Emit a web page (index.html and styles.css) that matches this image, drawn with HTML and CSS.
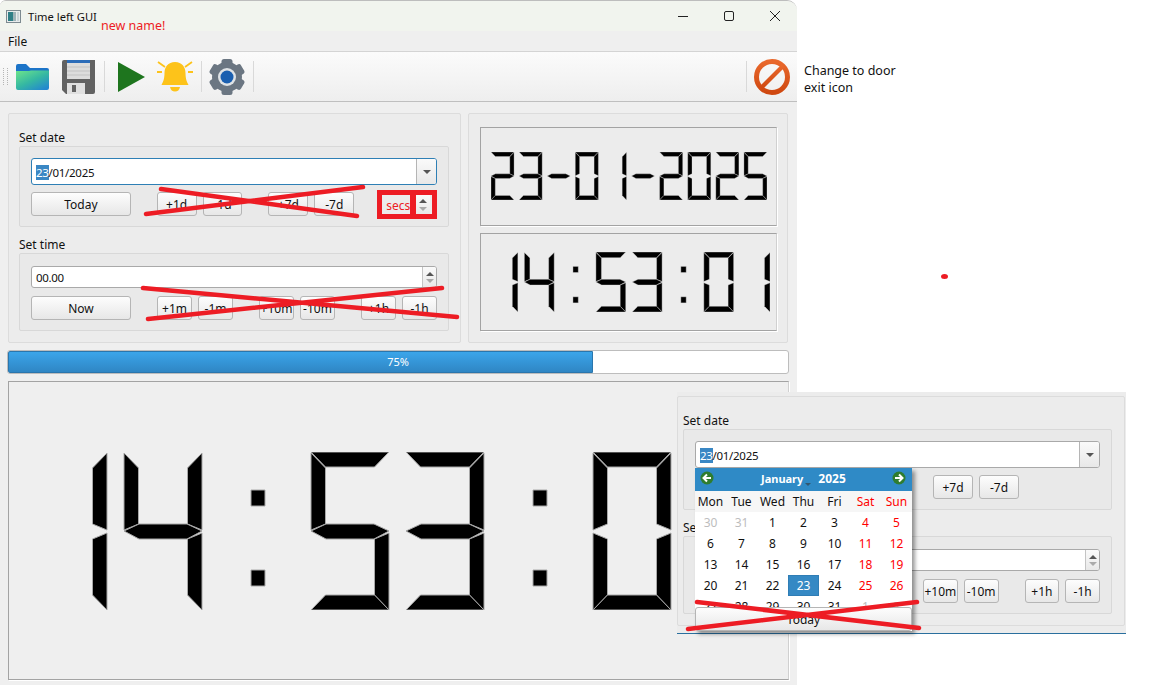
FILE: index.html
```html
<!DOCTYPE html>
<html lang="en">

<head>
    <meta charset="UTF-8">
    <meta name="viewport" content="width=device-width, initial-scale=1.0">
    <title>Time left GUI</title>
    <link rel="stylesheet" href="styles.css">
</head>

<body>
    <!-- LCD segments, shared by the three clocks -->
    <svg class="defs">
        <defs>
            <polygon id="sa" points="0,0 78,0 63.5,15 14.5,15" />
            <polygon id="sf" points="0,1 14.5,16 14.5,72 0,78" />
            <polygon id="sb" points="78,1 63.5,16 63.5,72 78,78" />
            <polygon id="sg" points="0,79 15,72 63,72 78,79 63,87 15,87" />
            <polygon id="se" points="0,81 14.5,87 14.5,143 0,158" />
            <polygon id="sc" points="78,81 63.5,87 63.5,143 78,158" />
            <polygon id="sd" points="0,158 78,158 63.5,143 14.5,143" />
            <g id="d0"><use href="#sa" /><use href="#sf" /><use href="#sb" /><use href="#se" /><use href="#sc" /><use href="#sd" /></g>
            <g id="d1"><use href="#sb" /><use href="#sc" /></g>
            <g id="d2"><use href="#sa" /><use href="#sb" /><use href="#sg" /><use href="#se" /><use href="#sd" /></g>
            <g id="d3"><use href="#sa" /><use href="#sb" /><use href="#sg" /><use href="#sc" /><use href="#sd" /></g>
            <g id="d4"><use href="#sf" /><use href="#sb" /><use href="#sg" /><use href="#sc" /></g>
            <g id="d5"><use href="#sa" /><use href="#sf" /><use href="#sg" /><use href="#sc" /><use href="#sd" /></g>
            <g id="colon"><rect x="0" y="38" width="14" height="16" /><rect x="0" y="118" width="14" height="16" /></g>
            <g id="clock">
                <use href="#d1" x="0" /><use href="#d4" x="95" /><use href="#colon" x="222" />
                <use href="#d5" x="282" /><use href="#d3" x="377" /><use href="#colon" x="504" />
                <use href="#d0" x="564" /><use href="#d1" x="659" />
            </g>
        </defs>
    </svg>

    <div class="window">
        <div class="titlebar">
            <svg class="app-icon" width="15" height="13" viewBox="0 0 15 13">
                <rect x="0.5" y="0.5" width="14" height="12" fill="#e8ecec" stroke="#7d8a90" />
                <rect x="2" y="2" width="5" height="9" fill="#2f7f86" />
                <rect x="7" y="2" width="3" height="9" fill="#9fb4b8" />
                <rect x="11" y="2" width="2" height="9" fill="#c9d3d6" />
            </svg>
            <span class="app-title">Time left GUI</span>
            <div class="win-controls">
                <svg width="10" height="10" viewBox="0 0 10 10"><path d="M0 5.5H10" stroke="#222" fill="none" /></svg>
                <svg width="10" height="10" viewBox="0 0 10 10"><rect x="0.5" y="0.5" width="9" height="9" rx="1.5" stroke="#222" fill="none" /></svg>
                <svg width="10" height="10" viewBox="0 0 10 10"><path d="M0 0L10 10M10 0L0 10" stroke="#222" fill="none" /></svg>
            </div>
        </div>
        <div class="menubar">File</div>

        <div class="toolbar">
            <div class="grip"></div>
            <svg class="tool tool-folder" width="33" height="26" viewBox="0 0 33 26">
                <defs>
                    <linearGradient id="folderFill" x1="0" y1="0" x2="0.8" y2="1">
                        <stop offset="0" stop-color="#6fe58a" />
                        <stop offset="0.55" stop-color="#35b8a2" />
                        <stop offset="1" stop-color="#2388cf" />
                    </linearGradient>
                </defs>
                <path d="M0 2Q0 0 2 0H10L14 4H31Q33 4 33 6V9H0Z" fill="#1c74c8" />
                <path d="M0 7H13L15 6.500H33V24Q33 26 31 26H2Q0 26 0 24Z" fill="url(#folderFill)" />
            </svg>
            <svg class="tool tool-save" width="33" height="34" viewBox="0 0 33 34">
                <path d="M2 0H33V32Q33 34 31 34H4L0 30V2Q0 0 2 0Z" fill="#626262" />
                <rect x="5" y="0" width="23" height="3" fill="#2b6cb8" />
                <rect x="5" y="3" width="23" height="16" fill="#dcdcdc" />
                <path d="M5 7H28M5 11H28M5 15H28" stroke="#c2c2c2" />
                <rect x="5" y="23" width="18" height="11" fill="#e0e0e0" />
                <rect x="10" y="25" width="4" height="7" fill="#626262" />
            </svg>
            <div class="sep sep-a"></div>
            <svg class="tool tool-play" width="27" height="30" viewBox="0 0 27 30">
                <polygon points="0,0 27,15 0,30" fill="#1e751e" />
            </svg>
            <svg class="tool tool-bell" width="36" height="31" viewBox="0 0 36 31">
                <path d="M18 1C11 1 7.500 6 7.500 12C7.500 18 6 21 4.500 24H31.500C30 21 28.500 18 28.500 12C28.500 6 25 1 18 1Z" fill="#fdc31a" />
                <path d="M13 26H23Q22 30.500 18 30.500Q14 30.500 13 26Z" fill="#fdc31a" />
                <path d="M0 11H5M31 11H36M1 1L8 6M35 1L28 6" stroke="#fdc31a" stroke-width="1.800" fill="none" />
            </svg>
            <div class="sep sep-b"></div>
            <svg class="tool tool-gear" width="36" height="36" viewBox="0 0 36 36">
                <g fill="#6b7682">
                    <circle cx="18" cy="18" r="15" />
                    <rect x="12.500" y="0" width="11" height="36" rx="2.500" />
                    <rect x="12.500" y="0" width="11" height="36" rx="2.500" transform="rotate(60 18 18)" />
                    <rect x="12.500" y="0" width="11" height="36" rx="2.500" transform="rotate(120 18 18)" />
                </g>
                <circle cx="18" cy="18" r="9" fill="#dfe3e6" />
                <circle cx="18" cy="18" r="6.500" fill="#1a5fb0" />
            </svg>
            <div class="sep sep-c"></div>
            <div class="sep sep-d"></div>
            <svg class="tool tool-stop" width="36" height="36" viewBox="0 0 36 36">
                <defs>
                    <linearGradient id="stopFill" x1="0" y1="0" x2="0" y2="1" gradientUnits="objectBoundingBox">
                        <stop offset="0" stop-color="#e9682c" />
                        <stop offset="1" stop-color="#cf4810" />
                    </linearGradient>
                </defs>
                <circle cx="18" cy="18" r="15.500" fill="none" stroke="url(#stopFill)" stroke-width="5" />
                <polygon points="27.500,5.500 30.500,8.500 8.500,30.500 5.500,27.500" fill="url(#stopFill)" />
            </svg>
        </div>

        <div class="content">
            <div class="top-row">
                <div class="group group-left">
                    <div class="group-label">Set date</div>
                    <div class="box box-date">
                        <div class="field field-focus">
                            <span class="field-text"><span class="sel">23</span>/01/2025</span>
                            <span class="drop"><i class="caret"></i></span>
                        </div>
                        <div class="btn-row">
                            <button class="btn btn-wide">Today</button>
                            <button class="btn btn-d gap">+1d</button>
                            <button class="btn btn-d">-1d</button>
                            <button class="btn btn-d gap">+7d</button>
                            <button class="btn btn-d">-7d</button>
                            <div class="secs">
                                <span class="secs-text">secs</span>
                                <span class="spinner"><i class="up"></i><i class="down"></i></span>
                            </div>
                        </div>
                    </div>
                    <div class="group-label label-second">Set time</div>
                    <div class="box box-time">
                        <div class="field field-spin">
                            <span class="field-text">00.00</span>
                            <span class="spinner"><i class="up"></i><i class="down"></i></span>
                        </div>
                        <div class="btn-row">
                            <button class="btn btn-wide">Now</button>
                            <button class="btn btn-m gap">+1m</button>
                            <button class="btn btn-m">-1m</button>
                            <button class="btn btn-m gap">+10m</button>
                            <button class="btn btn-m">-10m</button>
                            <button class="btn btn-m gap">+1h</button>
                            <button class="btn btn-m">-1h</button>
                        </div>
                    </div>
                </div>

                <div class="group group-right">
                    <div class="lcd-frame">
                        <svg class="lcd lcd-date" viewBox="0 0 933 158" preserveAspectRatio="none">
                            <use href="#d2" x="0" /><use href="#d3" x="95" /><use href="#sg" x="190" />
                            <use href="#d0" x="285" /><use href="#d1" x="380" /><use href="#sg" x="475" />
                            <use href="#d2" x="570" /><use href="#d0" x="665" /><use href="#d2" x="760" /><use href="#d5" x="855" />
                        </svg>
                    </div>
                    <div class="lcd-frame">
                        <svg class="lcd lcd-time" viewBox="0 0 737 158" preserveAspectRatio="none"><use href="#clock" /></svg>
                    </div>
                </div>
            </div>

            <div class="progress">
                <div class="progress-fill" style="width: 75%"></div>
                <span class="progress-text">75%</span>
            </div>

            <div class="lcd-frame lcd-frame-big">
                <svg class="lcd lcd-big" viewBox="0 0 737 158"><use href="#clock" /></svg>
            </div>
        </div>
    </div>

    <div class="note">Change to door<br>exit icon</div>

    <!-- pasted screenshot of the open date popup -->
    <div class="popup-shot">
        <div class="group group-popup">
            <div class="group-label">Set date</div>
            <div class="box box-date">
                <div class="field">
                    <span class="field-text"><span class="sel">23</span>/01/2025</span>
                    <span class="drop"><i class="caret"></i></span>
                </div>
                <div class="btn-row row-days">
                    <button class="btn btn-d">+7d</button>
                    <button class="btn btn-d">-7d</button>
                </div>
            </div>
            <div class="group-label label-second">Set time</div>
            <div class="box box-time">
                <div class="field field-spin">
                    <span class="field-text">00.00</span>
                    <span class="spinner"><i class="up"></i><i class="down"></i></span>
                </div>
                <div class="btn-row row-mins">
                    <button class="btn btn-m">+10m</button>
                    <button class="btn btn-m">-10m</button>
                    <button class="btn btn-m gap">+1h</button>
                    <button class="btn btn-m">-1h</button>
                </div>
            </div>
        </div>

        <div class="calendar">
            <div class="cal-head">
                <svg width="14" height="14" viewBox="0 0 14 14">
                    <circle cx="7" cy="7" r="6.500" fill="#2f7d2f" />
                    <path d="M11 7H4M7 3.500L3.500 7L7 10.500" stroke="#fff" stroke-width="2" fill="none" />
                </svg>
                <span class="cal-month">January<i class="cal-caret"></i></span>
                <span class="cal-year">2025</span>
                <svg width="14" height="14" viewBox="0 0 14 14">
                    <circle cx="7" cy="7" r="6.500" fill="#2f7d2f" />
                    <path d="M3 7H10M7 3.500L10.500 7L7 10.500" stroke="#fff" stroke-width="2" fill="none" />
                </svg>
            </div>
            <div class="cal-days">
                <span>Mon</span><span>Tue</span><span>Wed</span><span>Thu</span><span>Fri</span><span class="we">Sat</span><span class="we">Sun</span>
            </div>
            <div class="cal-grid">
                <span class="off">30</span><span class="off">31</span><span>1</span><span>2</span><span>3</span><span class="we">4</span><span class="we">5</span>
                <span>6</span><span>7</span><span>8</span><span>9</span><span>10</span><span class="we">11</span><span class="we">12</span>
                <span>13</span><span>14</span><span>15</span><span>16</span><span>17</span><span class="we">18</span><span class="we">19</span>
                <span>20</span><span>21</span><span>22</span><span class="today">23</span><span>24</span><span class="we">25</span><span class="we">26</span>
                <span>27</span><span>28</span><span>29</span><span>30</span><span>31</span><span class="off">1</span><span class="off">2</span>
            </div>
            <button class="btn cal-today">Today</button>
        </div>
    </div>

    <span class="scribble-text">new name!</span>

    <!-- red marker strokes drawn over the screenshot -->
    <svg class="scribbles" width="1152" height="685" viewBox="0 0 1152 685">
        <path d="M161 189L357 216M146 214L363 187" />
        <path d="M143 288L457 317M148 319L442 288" />
        <path d="M697 602L919 628M688 629L917 602" />
        <ellipse cx="944.500" cy="276.500" rx="3.500" ry="2.500" />
    </svg>
</body>

</html>
```
FILE: styles.css
```css
/* General Reset */
* {
    margin: 0;
    padding: 0;
    box-sizing: border-box;
}

body {
    position: relative;
    display: flex;
    width: 1152px;
    height: 685px;
    overflow: hidden;
    background-color: #fff;
    color: #111;
    font-family: 'Noto Sans', sans-serif;
    font-size: 12px;
}

.defs {
    display: none;
}

/* Window */
.window {
    width: 797px;
    height: 685px;
    flex-shrink: 0;
    background-color: #efefef;
    border-top: 1px solid #bdbdbd;
    border-radius: 6px 10px 0 0;
    overflow: hidden;
}

.titlebar {
    display: flex;
    align-items: center;
    height: 30px;
    padding-left: 6px;
    background-color: #f1f4ee;
}

.app-title {
    margin-left: 7px;
    font-size: 11.2px;
}

.win-controls {
    display: flex;
    gap: 36px;
    margin-left: auto;
    padding-right: 17px;
}

.menubar {
    height: 21px;
    padding: 2px 8px;
    line-height: 17px;
    background-color: #efefef;
    border-bottom: 1px solid #d4d4d4;
}

/* Toolbar */
.toolbar {
    display: flex;
    align-items: center;
    height: 50px;
    background: linear-gradient(#fbfbfb, #eeeeee);
    border-bottom: 1px solid #bfbfbf;
}

.grip {
    width: 5px;
    height: 17px;
    margin-left: 3px;
    border-left: 1px dotted #b5b5b5;
    border-right: 1px dotted #b5b5b5;
}

.tool {
    flex-shrink: 0;
}

.sep {
    width: 1px;
    height: 31px;
    background-color: #d9d9d9;
}

.tool-folder { margin-left: 8px; }
.tool-save { margin-left: 13px; }
.sep-a { margin-left: 9px; }
.tool-play { margin-left: 13px; }
.tool-bell { margin-left: 12px; }
.sep-b { margin-left: 8px; }
.tool-gear { margin-left: 7px; }
.sep-c { margin-left: 8px; }
.sep-d { margin-left: auto; }
.tool-stop { margin: 0 7px 0 7px; }

/* Main area */
.content {
    padding: 11px 8px 0 8px;
}

.top-row {
    display: flex;
    gap: 7px;
}

.group {
    border: 1px solid #dcdcdc;
    border-radius: 2px;
    background-color: #ececec;
}

.group-left {
    width: 453px;
    height: 230px;
    padding: 14px 11px 0 10px;
}

.group-right {
    display: flex;
    flex-direction: column;
    gap: 7px;
    width: 320px;
    height: 230px;
    padding: 13px 10px 11px 11px;
}

.group-label {
    height: 18px;
    line-height: 20px;
}

.label-second {
    margin-top: 8px;
}

.box {
    border: 1px solid #d8d8d8;
    border-radius: 2px;
    background-color: #e9e9e9;
    padding: 11px 11px 11px 11px;
}

.box-date {
    height: 81px;
}

.box-time {
    height: 78px;
    padding-top: 12px;
}

.field {
    display: flex;
    align-items: stretch;
    justify-content: space-between;
    height: 27px;
    background-color: #fff;
    border: 1px solid #a9a9a9;
    border-radius: 3px;
    overflow: hidden;
}

.field-focus {
    border-color: #2e7fb5;
}

.field-spin {
    height: 22px;
    margin-bottom: 8px;
}

.box-date .field {
    margin-bottom: 7px;
}

.field-text {
    padding: 1px 0 0 4px;
    align-self: center;
    font-size: 11.5px;
    letter-spacing: -0.3px;
}

.sel {
    background-color: #3a87c4;
    color: #fff;
}

.drop {
    display: flex;
    align-items: center;
    justify-content: center;
    width: 20px;
    border-left: 1px solid #b5b5b5;
    background: linear-gradient(#fafafa, #e8e8e8);
}

.caret {
    width: 0;
    height: 0;
    border-left: 4px solid transparent;
    border-right: 4px solid transparent;
    border-top: 4px solid #555;
}

.spinner {
    display: flex;
    flex-direction: column;
    align-items: center;
    justify-content: center;
    gap: 3px;
    width: 14px;
    background: linear-gradient(#fafafa, #e8e8e8);
    border-left: 1px solid #c4c4c4;
}

.up,
.down {
    width: 0;
    height: 0;
    border-left: 4px solid transparent;
    border-right: 4px solid transparent;
}

.up {
    border-bottom: 4px solid #555;
}

.down {
    border-top: 4px solid #aaa;
}

.btn-row {
    display: flex;
    gap: 6px;
    height: 24px;
}

.btn {
    height: 24px;
    font-family: inherit;
    font-size: 12px;
    color: #111;
    background: linear-gradient(#fdfdfd, #e7e7e7);
    border: 1px solid #b5b5b5;
    border-radius: 3px;
}

.btn-wide { width: 100px; }
.btn-d { width: 40px; }
.btn-m { width: 35px; }
.gap { margin-left: 20px; }

/* "secs" spin box, boxed in red by hand */
.secs {
    display: flex;
    width: 60px;
    height: 29px;
    margin: -2px 0 -3px 17px;
    border: 5px solid #ed1c24;
    background-color: #ececec;
}

.secs-text {
    width: 28px;
    padding-left: 4px;
    color: #ed1c24;
    line-height: 22px;
}

.secs .spinner {
    margin-left: 0;
    border-left: 6px solid #ed1c24;
    width: 20px;
    gap: 4px;
}

/* LCD clocks */
.lcd-frame {
    display: flex;
    align-items: center;
    justify-content: center;
    flex: 1;
    border: 1px solid #a3a3a3;
    border-right-color: #d0d0d0;
    box-shadow: 1px 1px 0 #fff;
}

.lcd {
    fill: #000;
    stroke: #a8a8a8;
    stroke-width: 1;
    stroke-linejoin: bevel;
}

.lcd-date,
.lcd-time {
    stroke: #e2e2e2;
}

.lcd polygon,
.lcd rect {
    vector-effect: non-scaling-stroke;
}

.lcd-date {
    width: 276px;
    height: 48px;
}

.lcd-time {
    width: 282px;
    height: 60px;
}

.lcd-frame-big {
    justify-content: flex-start;
    width: 781px;
    height: 299px;
    margin-top: 7px;
    padding-left: 20px;
    flex: none;
}

.lcd-big {
    width: 737px;
    height: 158px;
    flex-shrink: 0;
}

/* Progress bar */
.progress {
    position: relative;
    width: 782px;
    height: 24px;
    margin: 7px 0 0 -1px;
    background-color: #fff;
    border: 1px solid #bdbdbd;
    border-radius: 3px;
}

.progress-fill {
    height: 100%;
    background: linear-gradient(#3ba5ea, #2f86c4);
    border: 1px solid #2a76ad;
    border-radius: 2px 0 0 2px;
}

.progress-text {
    position: absolute;
    top: 2px;
    left: 0;
    width: 100%;
    color: #fff;
    text-align: center;
    font-size: 11px;
    line-height: 18px;
}

/* Notes on the side */
.note {
    margin: 62px 0 0 7px;
    font-size: 12.5px;
    line-height: 17px;
}

.scribble-text {
    position: absolute;
    top: 17px;
    left: 101px;
    color: #ed1c24;
    font-size: 12.5px;
}

.scribbles {
    position: absolute;
    top: 0;
    left: 0;
    fill: #ed1c24;
    pointer-events: none;
}

.scribbles path {
    fill: none;
    stroke: #ed1c24;
    stroke-width: 4.500;
    stroke-linecap: round;
}

/* Date popup picture */
.popup-shot {
    position: absolute;
    top: 392px;
    left: 677px;
    width: 449px;
    height: 242px;
    padding-top: 4px;
    background-color: #ececec;
    border-bottom: 1px solid #2a6f9e;
}

.group-popup {
    width: 448px;
    height: 230px;
    padding: 14px 12px 0 5px;
}

.row-days {
    padding-left: 238px;
}

.row-mins {
    padding-left: 228px;
}

.calendar {
    position: absolute;
    top: 76px;
    left: 18px;
    width: 217px;
    background-color: #fff;
    box-shadow: 3px 3px 4px rgba(0, 0, 0, 0.4);
}

.cal-head {
    display: flex;
    align-items: center;
    height: 23px;
    padding: 0 6px 3px 5px;
    background-color: #2f8ac6;
    color: #fff;
    font-weight: bold;
}

.cal-month {
    position: relative;
    margin-left: 47px;
    font-size: 11px;
}

.cal-caret {
    position: absolute;
    right: -8px;
    bottom: 0;
    border-left: 3px solid transparent;
    border-right: 3px solid transparent;
    border-top: 3px solid #33566f;
}

.cal-year {
    margin: 0 auto 0 15px;
}

.cal-days,
.cal-grid {
    display: grid;
    grid-template-columns: repeat(7, 31px);
    text-align: center;
}

.cal-days {
    height: 21px;
    line-height: 21px;
    background-color: #f6f6f6;
}

.cal-grid {
    grid-auto-rows: 21px;
    height: 95px;
    overflow: hidden;
    line-height: 21px;
}

.we {
    color: #f00;
}

.off {
    color: #bdbdbd;
}

.today {
    background-color: #3589c4;
    color: #fff;
    border: 1px solid #2f7db5;
    line-height: 19px;
}

.cal-today {
    display: block;
    width: 100%;
}
```
